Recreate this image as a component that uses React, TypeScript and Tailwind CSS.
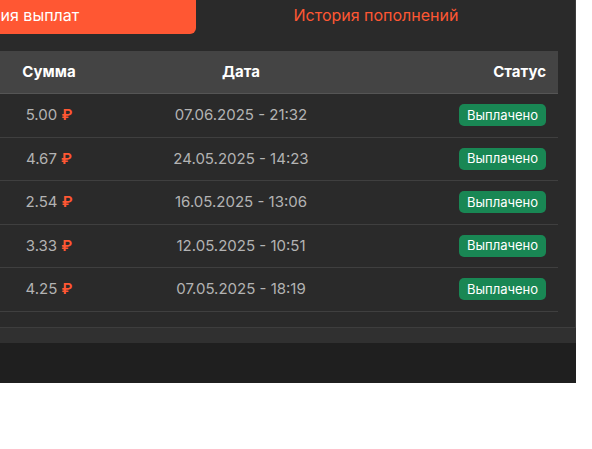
import React from 'react';

const rows = [
  { amount: '5.00', date: '07.06.2025 - 21:32' },
  { amount: '4.67', date: '24.05.2025 - 14:23' },
  { amount: '2.54', date: '16.05.2025 - 13:06' },
  { amount: '3.33', date: '12.05.2025 - 10:51' },
  { amount: '4.25', date: '07.05.2025 - 18:19' },
];

export default function App() {
  return (
    <div className="w-[576px] h-[383px] bg-[#1f1f1f] overflow-hidden font-['Inter',sans-serif]">
      <div className="bg-[#303030] pb-[15px]">
        <div className="h-[328px] bg-[#2a2a2a] border-r border-b border-[#3d3d3d] overflow-hidden">
          {/* Tabs */}
          <div className="flex w-[720px] -ml-[164px]">
            <button className="w-[360px] h-[34px] pb-[4px] bg-[#ff5733] rounded-b-[6px] text-white text-[16px] text-center">
              История выплат
            </button>
            <button className="w-[360px] h-[30px] text-[#ff5733] text-[16px] text-center">
              История пополнений
            </button>
          </div>

          {/* Table */}
          <div className="mt-[17px] w-[558px]">
            <div className="grid grid-cols-[98px_286px_1fr] items-center h-[43px] bg-[#444444] border-b border-[#555555] text-white text-[15px] font-bold">
              <div className="text-center">Сумма</div>
              <div className="text-center">Дата</div>
              <div className="text-right pr-3">Статус</div>
            </div>
            {rows.map((r) => (
              <div
                key={r.date}
                className="grid grid-cols-[98px_286px_1fr] items-center h-[43.5px] border-b border-[#3f3f3f] text-[#b3b3b3] text-[15px]"
              >
                <div className="text-center">
                  {r.amount} <span className="text-[#ff5733] font-semibold">₽</span>
                </div>
                <div className="text-center">{r.date}</div>
                <div className="flex justify-end pr-3">
                  <span className="h-[22px] w-[87px] flex items-center justify-center rounded-[5px] bg-[#198754] text-white text-[13px]">
                    Выплачено
                  </span>
                </div>
              </div>
            ))}
          </div>
        </div>
      </div>
    </div>
  );
}
